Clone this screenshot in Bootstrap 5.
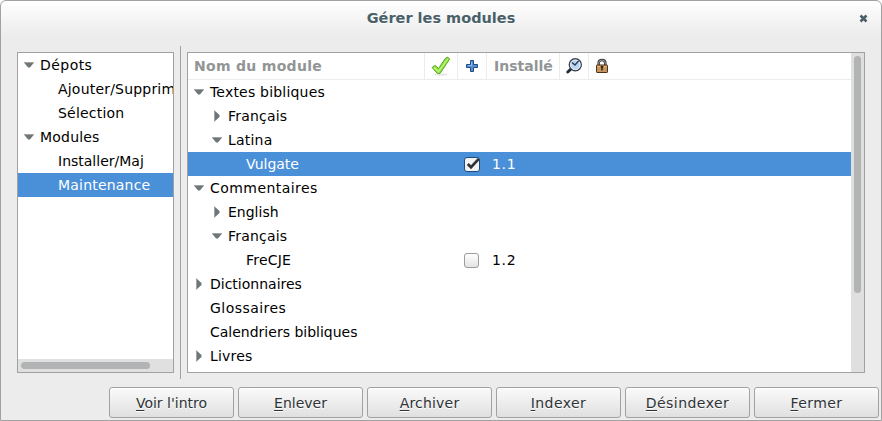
<!DOCTYPE html>
<html lang="fr">
<head>
<meta charset="utf-8">
<title>Gérer les modules</title>
<link rel="stylesheet" href="https://cdn.jsdelivr.net/npm/bootstrap@5.3.0/dist/css/bootstrap.min.css">
<style>
body{width:882px;height:421px;background:#fff;font-family:"DejaVu Sans",sans-serif;font-size:14px;line-height:24px;color:#000;overflow:hidden}
.window{width:882px;height:421px;border:1px solid #a1a1a1;border-radius:6px 6px 0 0;background:linear-gradient(#fff 0,#ececec 34px)}
.titlebar{height:45px;flex:none}
.titlebar h1{font-size:14.5px;line-height:34px;color:#4a6069;text-shadow:0 1px #fff}
.close-btn{position:absolute;right:13px;top:13px;width:9px;height:9px;border:0;background:none;padding:0;line-height:0}
.main-area{height:333px;flex:none;padding-left:16px}
.pane{height:321px;border:1px solid #a1a1a1;background:#fff;margin-top:6px}
.pane-left{width:157px}
.pane-right{width:678px}
.divider{width:1px;height:333px;background:#a1a1a1;margin:0 6px}
.tree-row{height:24px;white-space:nowrap}
.tree-row.picked{background:#4a90d9;color:#fff}
.arrow{width:10px;flex:none;height:24px;margin-right:6px}
.l0{padding-left:6px}.l1{padding-left:24px}.l2{padding-left:40px}.l3{padding-left:58px}.leaf{padding-left:22px}
.t1{letter-spacing:.2px}.t2{letter-spacing:.45px}
.trough-h{height:13px;background:#e0e0e0;padding:3px}
.thumb-h{width:129px;height:7px;border-radius:4px;background:#b2b3b5}
.trough-v{width:13px;flex:none;background:#dfdfdf;padding:3px}
.thumb-v{width:7px;height:237px;border-radius:4px;background:#b2b3b5}
.heads{height:27px;border-bottom:1px solid #ececec;color:#929595;font-weight:700;line-height:26px}
.heads>div{border-right:1px solid #ececec}
.c1{width:237px;padding-left:6px;letter-spacing:.3px}.c2{width:33px}.c3{width:29px}.c4{width:73px;padding-left:7px}.c5{width:29px}
.name-cell{width:270px}
.check-cell{padding-left:6px}
.version{padding-left:5px;letter-spacing:.7px}
.check{width:15px;height:15px;border:1px solid #9c9c9c;border-radius:3px;background:linear-gradient(#fff,#e3e3e3)}
.actions{height:41px;flex:none;padding:8px 2px 0 0}
.action{width:125px;height:31px;border:1px solid #a1a1a1;border-radius:3px;background:linear-gradient(#fafafa,#e0e0e0);padding:0;font-size:14px;line-height:28px;color:#2e3436;text-shadow:0 1px #fff;box-shadow:inset 0 1px #fff}
.action u{text-underline-offset:2px}
</style>
<script src="https://cdn.jsdelivr.net/npm/bootstrap@5.3.0/dist/js/bootstrap.bundle.min.js"></script>
</head>
<body>
<svg class="d-none"><defs>
<symbol id="down" viewBox="0 0 10 24"><path d="M0 9.5H10L6 14.5H4Z" fill="#6f7679"/><path d="M0 9.5H10" stroke="#a0a4a5"/></symbol>
<symbol id="right" viewBox="0 0 10 24"><path d="M2.5 6.5L7.5 11V13L2.5 17.5Z" fill="#6f7679"/><path d="M2.5 6.5V17.5" stroke="#a0a4a5"/></symbol>
</defs></svg>
<div class="window position-relative d-flex flex-column">
  <header class="titlebar text-center"><h1 class="fw-bold m-0">Gérer les modules</h1>
    <button class="close-btn" aria-label="Fermer"><svg width="9" height="9" viewBox="0 0 9 9"><path d="M1.5 1.5L7.5 7.5M7.5 1.5L1.5 7.5" stroke="#4a6069" stroke-width="2.6"/></svg></button>
  </header>
  <main class="main-area d-flex">
    <nav class="pane pane-left d-flex flex-column overflow-hidden">
      <div class="flex-grow-1 overflow-hidden">
      <div class="tree-row d-flex l0"><svg class="arrow"><use href="#down"/></svg><span class="t2">Dépots</span></div>
      <div class="tree-row d-flex l2"><span class="t1">Ajouter/Supprimer</span></div>
      <div class="tree-row d-flex l2"><span class="t1">Sélection</span></div>
      <div class="tree-row d-flex l0"><svg class="arrow"><use href="#down"/></svg><span class="t1">Modules</span></div>
      <div class="tree-row d-flex l2"><span>Installer/Maj</span></div>
      <div class="tree-row d-flex l2 picked"><span class="t1">Maintenance</span></div>
      </div>
      <div class="trough-h"><div class="thumb-h"></div></div>
    </nav>
    <div class="divider"></div>
    <section class="pane pane-right d-flex">
      <div class="flex-grow-1 overflow-hidden">
        <div class="heads d-flex">
          <div class="c1">Nom du module</div>
          <div class="c2 d-flex align-items-center justify-content-center"><svg width="22" height="22" viewBox="0 0 22 22"><ellipse cx="11" cy="19.5" rx="7" ry="1.3" fill="#e8e8e8"/><path d="M2 12.5L5.2 10.3L8.5 13.5L15.5 3.2Q18 1 19.7 4L10 18.5H7.5Z" fill="#8ae234" stroke="#5aa62a" stroke-linejoin="round"/><path d="M4 12.5L8.5 16.5L17.8 4" fill="none" stroke="#c4f58a" stroke-width="1.2"/></svg></div>
          <div class="c3 d-flex align-items-center justify-content-center"><svg width="12" height="12" viewBox="0 0 12 12"><path d="M4.5 .5H7.5V4.5H11.5V7.5H7.5V11.5H4.5V7.5H.5V4.5H4.5Z" fill="#5790d0" stroke="#204a87" stroke-linejoin="round"/><path d="M5.5 2V5.5H2" fill="none" stroke="#91b9e6"/></svg></div>
          <div class="c4">Installé</div>
          <div class="c5 d-flex align-items-center justify-content-center"><svg width="18" height="18" viewBox="0 0 18 18"><path d="M6 12L2.8 15" stroke="#222b38" stroke-width="3" stroke-linecap="round"/><circle cx="10.3" cy="7.8" r="6" fill="#b9d5f4" stroke="#3b414b" stroke-width="1.4"/><circle cx="10.3" cy="7.8" r="4.8" fill="none" stroke="#e5f0fc"/><path d="M7 5.5L10 8L13.5 4" fill="none" stroke="#303d50" stroke-width="1.4"/></svg></div>
          <div class="c5 border-0 d-flex align-items-center justify-content-center"><svg width="14" height="16" viewBox="0 0 14 16" class="me-1"><path d="M3.7 8V5Q3.7 2 7 2T10.3 5V8" fill="none" stroke="#333" stroke-width="2.6"/><path d="M3.7 8V5Q3.7 2 7 2T10.3 5V8" fill="none" stroke="#bbb" stroke-width=".8"/><rect x="1.5" y="7" width="11" height="7.5" rx=".6" fill="#c69560" stroke="#4c3219"/><path d="M2 8.5H12" stroke="#e6b77c"/><path d="M5.7 8.7H8.3M7 8.5V12.5" stroke="#2b1b0d" stroke-width="1.4"/></svg></div>
        </div>
        <div class="tree-row d-flex l0"><svg class="arrow"><use href="#down"/></svg><span class="t1">Textes bibliques</span></div>
        <div class="tree-row d-flex l1"><svg class="arrow"><use href="#right"/></svg><span class="t1">Français</span></div>
        <div class="tree-row d-flex l1"><svg class="arrow"><use href="#down"/></svg><span class="t1">Latina</span></div>
        <div class="tree-row d-flex align-items-center picked"><div class="name-cell l3">Vulgate</div><div class="c3 check-cell d-flex"><svg width="18" height="17" viewBox="0 0 18 17"><rect x=".5" y="1.5" width="15" height="14" rx="2.5" fill="#f3f3f3" stroke="#1d4c7c"/><path d="M3.8 8L7 11.2L14.8 2.8" fill="none" stroke="#2e3436" stroke-width="2.7"/></svg></div><span class="version">1.1</span></div>
        <div class="tree-row d-flex l0"><svg class="arrow"><use href="#down"/></svg><span class="t2">Commentaires</span></div>
        <div class="tree-row d-flex l1"><svg class="arrow"><use href="#right"/></svg><span>English</span></div>
        <div class="tree-row d-flex l1"><svg class="arrow"><use href="#down"/></svg><span class="t1">Français</span></div>
        <div class="tree-row d-flex align-items-center"><div class="name-cell l3 t1">FreCJE</div><div class="c3 check-cell d-flex"><div class="check"></div></div><span class="version">1.2</span></div>
        <div class="tree-row d-flex l0"><svg class="arrow"><use href="#right"/></svg><span>Dictionnaires</span></div>
        <div class="tree-row d-flex leaf"><span class="t2">Glossaires</span></div>
        <div class="tree-row d-flex leaf"><span>Calendriers bibliques</span></div>
        <div class="tree-row d-flex l0"><svg class="arrow"><use href="#right"/></svg><span class="t1">Livres</span></div>
      </div>
      <div class="trough-v"><div class="thumb-v"></div></div>
    </section>
  </main>
  <footer class="actions d-flex justify-content-end gap-1">
    <button class="btn action"><u>V</u>oir l'intro</button>
    <button class="btn action"><u>E</u>nlever</button>
    <button class="btn action t1"><u>A</u>rchiver</button>
    <button class="btn action t2"><u>I</u>ndexer</button>
    <button class="btn action t2"><u>D</u>ésindexer</button>
    <button class="btn action t2"><u>F</u>ermer</button>
  </footer>
</div>
</body>
</html>
